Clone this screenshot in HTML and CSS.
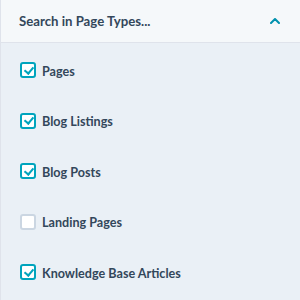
FILE: index.html
```html
<!DOCTYPE html>
<html lang="en">

<head>
    <meta charset="UTF-8">
    <title>Page types filter</title>
    <link rel="stylesheet" href="styles.css">
</head>

<body>
    <div class="panel">
        <div class="panel-header">
            <span class="panel-title">Search in Page Types...</span>
            <svg class="caret" width="10" height="6" viewBox="0 0 10 6">
                <path d="M1 5 L5 1 L9 5" fill="none" stroke="#0091ae" stroke-width="2" stroke-linecap="round" stroke-linejoin="round" />
            </svg>
        </div>

        <ul class="options">
            <li class="option checked"><span class="box"></span>Pages</li>
            <li class="option checked"><span class="box"></span>Blog Listings</li>
            <li class="option checked"><span class="box"></span>Blog Posts</li>
            <li class="option"><span class="box"></span>Landing Pages</li>
            <li class="option checked"><span class="box"></span>Knowledge Base Articles</li>
        </ul>
    </div>
</body>

</html>
```

FILE: styles.css
```css
* {
    margin: 0;
    padding: 0;
    box-sizing: border-box;
}

body {
    font-family: Lato, "Liberation Sans", sans-serif;
    background-color: #eaf0f6;
    color: #33475b;
    width: 300px;
    height: 300px;
    overflow: hidden;
}

.panel {
    border-left: 1px solid #dfe3eb;
    height: 300px;
}

.panel-header {
    height: 43px;
    background-color: #f5f8fa;
    border-bottom: 1px solid #dfe3eb;
    display: flex;
    align-items: center;
    justify-content: space-between;
    padding: 0 20px 0 18px;
}

.panel-title {
    font-size: 13.2px;
    font-weight: 700;
}

.caret {
    display: block;
}

.options {
    list-style: none;
    display: flex;
    flex-direction: column;
    gap: 34.6px;
    padding: 19px 0 0 19px;
}

.option {
    display: flex;
    align-items: center;
    gap: 6px;
    height: 16px;
    font-size: 12.6px;
    font-weight: 700;
    padding-top: 2px;
}

.box {
    width: 16px;
    height: 16px;
    margin-top: -2px;
    border-radius: 3px;
    background-color: #fff;
    border: 2px solid #cbd6e2;
    position: relative;
}

.checked .box {
    border-color: #00a4bd;
}

.checked .box::after {
    content: "";
    position: absolute;
    left: 3.5px;
    top: 0.5px;
    width: 4px;
    height: 7px;
    border-right: 2.5px solid #00a4bd;
    border-bottom: 2.5px solid #00a4bd;
    transform: rotate(40deg);
}
```
